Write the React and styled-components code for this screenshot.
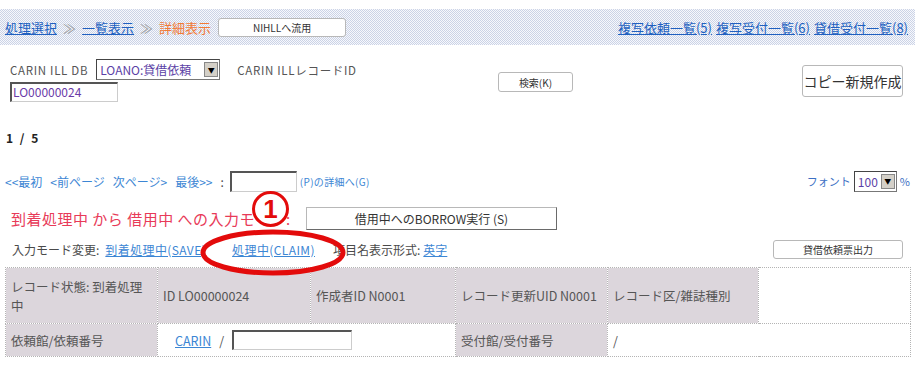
import React from 'react'
import styled, { createGlobalStyle } from 'styled-components'

const GlobalStyle = createGlobalStyle`
  html, body {
    margin: 0;
    padding: 0;
    background: #fff;
  }
  body {
    font-family: "Noto Sans CJK JP", "Noto Sans", sans-serif;
    color: #4a4a4a;
    width: 915px;
    height: 366px;
    overflow: hidden;
  }
`

const dither = (a, b) => `repeating-conic-gradient(${a} 0 25%, ${b} 0 50%) 0 0 / 2px 2px`

const Page = styled.div`
  position: relative;
  width: 915px;
  height: 366px;
  padding-top: 9px;
  box-sizing: border-box;
`

const TopBar = styled.div`
  height: 36px;
  display: flex;
  align-items: center;
  justify-content: space-between;
  padding: 0 7px 0 5px;
  background: ${dither('#cbd3e6', '#f7f8fc')};
  font-size: 13px;
`

const Crumbs = styled.div`
  display: flex;
  align-items: center;
`

const Link = styled.a`
  color: ${({ $light }) => ($light ? '#3c86d4' : '#2060c0')};
  text-decoration: underline;
  cursor: pointer;
  white-space: nowrap;
  letter-spacing: ${({ $ls }) => $ls || 0}px;
`

const PlainLink = styled.a`
  color: #3c86d4;
  cursor: pointer;
  white-space: nowrap;
`

const Sep = styled.span`
  color: #9a9a9a;
  margin: 0 6px;
`

const Current = styled.span`
  color: #f27a36;
`

const RightLinks = styled.div`
  display: flex;
  gap: 4px;
  font-size: 13px;
`

const Button = styled.button`
  font-family: inherit;
  background: #fff;
  color: #333;
  border: 1px solid #b8b8b8;
  border-right-color: ${({ $raised }) => ($raised ? '#6a6a6a' : '#b8b8b8')};
  border-bottom-color: ${({ $raised }) => ($raised ? '#6a6a6a' : '#b8b8b8')};
  border-radius: ${({ $round }) => ($round ? '3px' : '0')};
  font-size: ${({ $size }) => $size || 10}px;
  width: ${({ $w }) => $w}px;
  height: ${({ $h }) => $h}px;
  margin-left: ${({ $ml }) => $ml || 0}px;
  margin-top: ${({ $mt }) => $mt || 0}px;
  padding: 0;
  cursor: pointer;
  white-space: nowrap;
  flex-shrink: 0;
`

const SearchRow = styled.div`
  margin-top: 14px;
  height: 43px;
  display: flex;
  align-items: flex-start;
  padding: 0 12px 0 10px;
`

const SearchFields = styled.div`
  width: 488px;
  display: flex;
  flex-direction: column;
  gap: 2px;
`

const FieldLine = styled.div`
  display: flex;
  align-items: center;
  height: 21px;
  font-size: 11.5px;
`

const Label = styled.span`
  color: #555;
  margin-left: ${({ $ml }) => $ml || 0}px;
  margin-right: ${({ $mr }) => $mr || 0}px;
  letter-spacing: 0.7px;
  white-space: nowrap;
`

const SelectBox = styled.div`
  display: flex;
  align-items: center;
  justify-content: space-between;
  box-sizing: border-box;
  width: ${({ $w }) => $w}px;
  height: ${({ $h }) => $h || 21}px;
  border: 1px solid #777;
  border-top-color: #444;
  border-left-color: #444;
  background: #fff;
  padding-left: 3px;
  font-size: 12px;
  color: #5b3fa6;
`

const Arrow = styled.span`
  width: 14px;
  height: 15px;
  margin-right: 1px;
  background: #d4d0c8;
  border: 1px solid #888;
  box-sizing: border-box;
  display: flex;
  align-items: center;
  justify-content: center;
  font-size: 7px;
  color: #000;
`

const TextBox = styled.div`
  box-sizing: border-box;
  width: ${({ $w }) => $w}px;
  height: ${({ $h }) => $h || 20}px;
  margin-left: ${({ $ml }) => $ml || 0}px;
  border: 1px solid #ccc;
  border-top: 2px solid #555;
  border-left: 2px solid #555;
  background: #fff;
  font-size: 12px;
  color: #6a3aa8;
  padding-left: 1px;
  line-height: 16px;
  flex-shrink: 0;
`

const Spacer = styled.div`
  flex: 1;
`

const Counter = styled.div`
  margin-top: 27px;
  padding-left: 6px;
  height: 16px;
  font-size: 12px;
  font-weight: bold;
  color: #222;
  letter-spacing: 2px;
`

const PagerRow = styled.div`
  margin-top: 25px;
  height: 22px;
  display: flex;
  align-items: center;
  padding: 0 5px 0 5px;
  font-size: 12px;
`

const Pager = styled.div`
  display: flex;
  align-items: center;
  gap: 8px;
`

const Small = styled.span`
  font-size: 10px;
  color: #3c86d4;
  margin-left: 3px;
  letter-spacing: 0.3px;
`

const FontCtl = styled.div`
  margin-left: auto;
  display: flex;
  align-items: center;
  font-size: 11px;
  color: #3c6fc4;
  gap: 3px;
`

const ModeRow = styled.div`
  margin-top: 15px;
  height: 22px;
  display: flex;
  align-items: center;
  padding-left: 11px;
`

const RedTitle = styled.span`
  color: #e83a58;
  font-size: 15px;
  width: 295px;
  letter-spacing: 0.5px;
  white-space: nowrap;
  overflow: hidden;
`

const ChangeRow = styled.div`
  margin-top: 10px;
  height: 20px;
  display: flex;
  align-items: center;
  padding: 0 12px 0 12px;
  font-size: 12px;
`

const ChangeItem = styled.span`
  margin-left: ${({ $ml }) => $ml || 0}px;
  white-space: nowrap;
`

const Table = styled.table`
  margin: 8px 0 0 5px;
  width: 905px;
  border-collapse: collapse;
  table-layout: fixed;
  font-size: 12.5px;
  color: #555;
`

const Row = styled.tr`
  height: ${({ $h }) => $h}px;
`

const Cell = styled.td`
  background: ${({ $white }) => ($white ? '#fff' : dither('#cac6ca', '#eee6ee'))};
  border: 1px dotted #b4b4b4;
  padding: ${({ $pl }) => `0 4px 0 ${$pl || 5}px`};
  vertical-align: middle;
  line-height: 19px;
  white-space: ${({ $wrap }) => ($wrap ? 'normal' : 'nowrap')};
  overflow: hidden;
`

const Inline = styled.div`
  display: flex;
  align-items: center;
  gap: 8px;
`

const Ring = styled.svg`
  position: absolute;
  left: 199px;
  top: 229px;
`

const Badge = styled.div`
  position: absolute;
  left: 252px;
  top: 191px;
  width: 37px;
  height: 36px;
  box-sizing: border-box;
  border: 3px solid #e30b0b;
  border-radius: 50%;
  background: #fff;
  color: #e30b0b;
  font-family: "Liberation Sans", sans-serif;
  font-weight: bold;
  font-size: 26px;
  line-height: 30px;
  text-align: center;
`

export default function App() {
  return (
    <Page>
      <GlobalStyle />
      <TopBar>
        <Crumbs>
          <Link>処理選択</Link>
          <Sep>≫</Sep>
          <Link>一覧表示</Link>
          <Sep>≫</Sep>
          <Current>詳細表示</Current>
          <Button $w={128} $h={19} $ml={7} $round>NIHLLへ流用</Button>
        </Crumbs>
        <RightLinks>
          <Link>複写依頼一覧(5)</Link>
          <Link>複写受付一覧(6)</Link>
          <Link>貸借受付一覧(8)</Link>
        </RightLinks>
      </TopBar>

      <SearchRow>
        <SearchFields>
          <FieldLine>
            <Label $mr={8}>CARIN ILL DB</Label>
            <SelectBox $w={124}>
              LOANO:貸借依頼
              <Arrow>▼</Arrow>
            </SelectBox>
            <Label $ml={17}>CARIN ILLレコードID</Label>
          </FieldLine>
          <TextBox $w={108}>LO00000024</TextBox>
        </SearchFields>
        <Button $w={75} $h={20} $mt={13} $round>検索(K)</Button>
        <Spacer />
        <Button $w={101} $h={32} $mt={6} $size={14} $round>コピー新規作成</Button>
      </SearchRow>

      <Counter>1 / 5</Counter>

      <PagerRow>
        <Pager>
          <PlainLink>&lt;&lt;最初</PlainLink>
          <PlainLink>&lt;前ページ</PlainLink>
          <PlainLink>次ページ&gt;</PlainLink>
          <PlainLink>最後&gt;&gt;</PlainLink>
          <span>:</span>
        </Pager>
        <TextBox $w={67} $h={21} $ml={6} />
        <Small>(P)の詳細へ(G)</Small>
        <FontCtl>
          フォント
          <SelectBox $w={43} $h={21}>
            100
            <Arrow>▼</Arrow>
          </SelectBox>
          <span>%</span>
        </FontCtl>
      </PagerRow>

      <ModeRow>
        <RedTitle>到着処理中 から 借用中 への入力モード:</RedTitle>
        <Button $w={251} $h={23} $size={12} $raised>借用中へのBORROW実行 (S)</Button>
      </ModeRow>

      <ChangeRow>
        <ChangeItem>入力モード変更:</ChangeItem>
        <ChangeItem $ml={6}><Link $light $ls={0.4}>到着処理中(SAVE)</Link></ChangeItem>
        <ChangeItem $ml={26}><Link $light $ls={0.4}>処理中(CLAIM)</Link></ChangeItem>
        <ChangeItem $ml={18}>項目名表示形式:</ChangeItem>
        <ChangeItem $ml={3}><Link $light>英字</Link></ChangeItem>
        <Spacer />
        <Button $w={130} $h={19} $round>貸借依頼票出力</Button>
      </ChangeRow>

      <Table>
        <colgroup>
          <col style={{ width: 152 }} />
          <col style={{ width: 153 }} />
          <col style={{ width: 145 }} />
          <col style={{ width: 152 }} />
          <col style={{ width: 151 }} />
          <col style={{ width: 152 }} />
        </colgroup>
        <tbody>
          <Row $h={56}>
            <Cell $wrap>レコード状態: 到着処理中</Cell>
            <Cell>ID LO00000024</Cell>
            <Cell>作成者ID N0001</Cell>
            <Cell>レコード更新UID N0001</Cell>
            <Cell>レコード区/雑誌種別</Cell>
            <Cell $white />
          </Row>
          <Row $h={33}>
            <Cell>依頼館/依頼番号</Cell>
            <Cell colSpan={2} $white $pl={17}>
              <Inline>
                <Link $light>CARIN</Link>
                <span>/</span>
                <TextBox $w={120} $h={20} />
              </Inline>
            </Cell>
            <Cell>受付館/受付番号</Cell>
            <Cell colSpan={2} $white>/</Cell>
          </Row>
        </tbody>
      </Table>

      <Ring width="150" height="48" viewBox="0 0 150 48">
        <ellipse cx="74" cy="23.5" rx="70" ry="20.5" fill="none" stroke="#e30b0b" strokeWidth="5" />
      </Ring>
      <Badge>1</Badge>
    </Page>
  )
}
